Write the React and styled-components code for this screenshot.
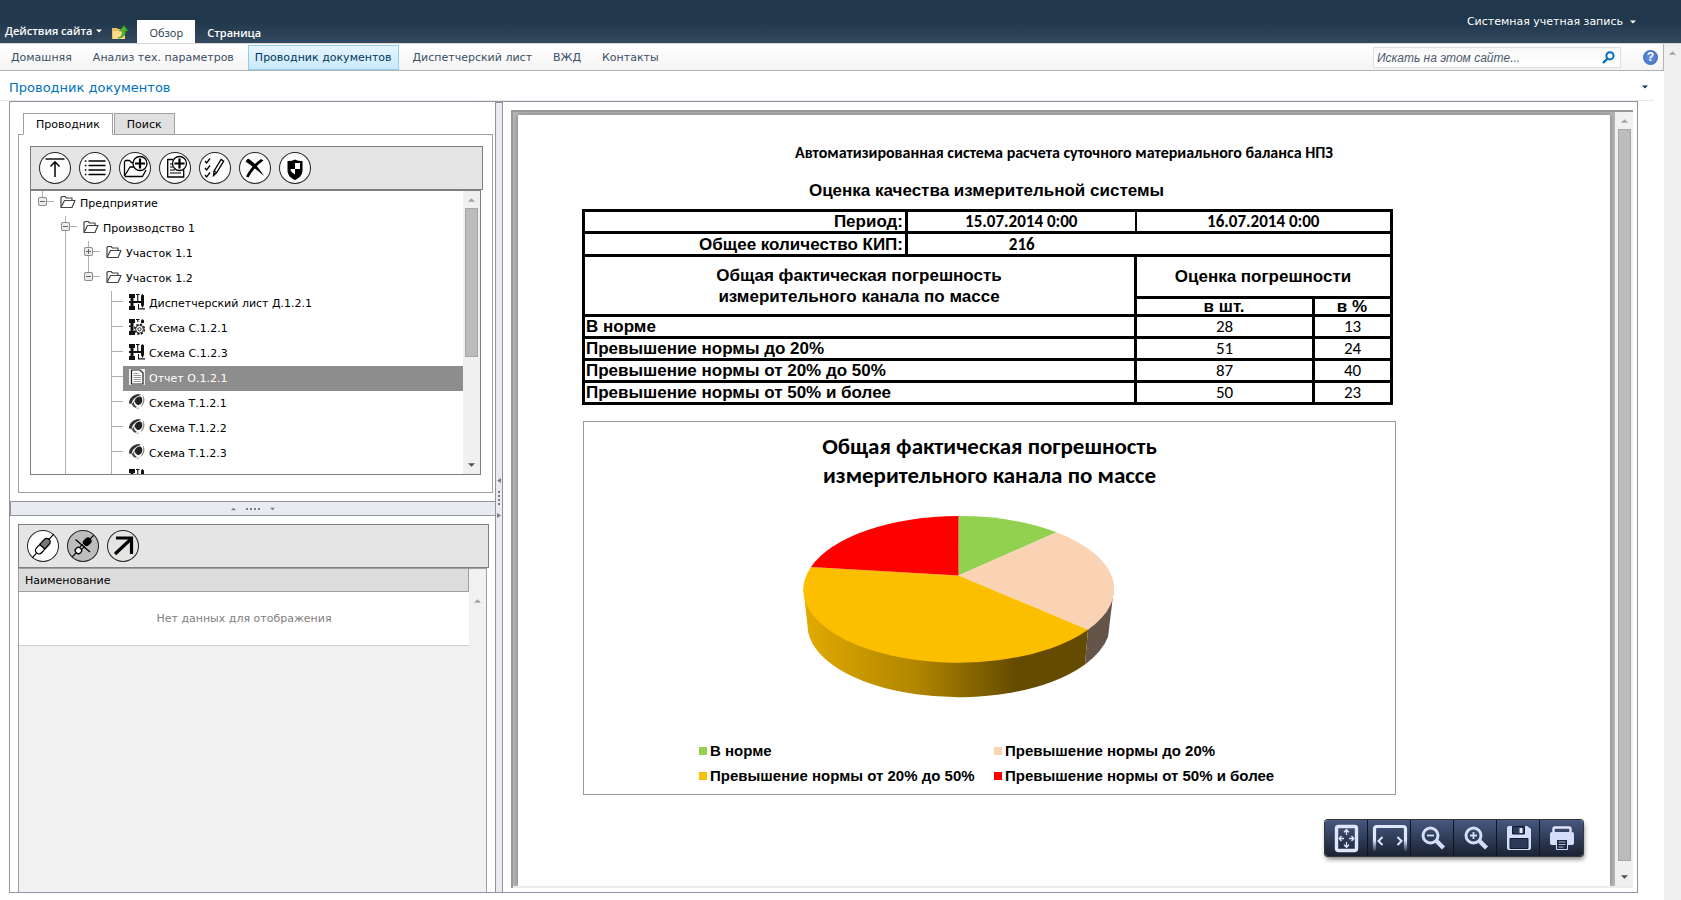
import React, { useState } from "react";
import styled, { createGlobalStyle, css } from "styled-components";

const NAV = [
  "Домашняя",
  "Анализ тех. параметров",
  "Проводник документов",
  "Диспетчерский лист",
  "ВЖД",
  "Контакты",
];

// guides: what every indent cell of the row draws
const TREE = [
  { name: "Предприятие", icon: "folder", guides: ["stub"], toggle: "minus" },
  { name: "Производство 1", icon: "folder", guides: ["none", "full"], toggle: "minus" },
  { name: "Участок 1.1", icon: "folder", guides: ["none", "line", "full"], toggle: "plus" },
  { name: "Участок 1.2", icon: "folder", guides: ["none", "line", "stub"], toggle: "minus" },
  { name: "Диспетчерский лист Д.1.2.1", icon: "sheet", guides: ["none", "line", "none", "full"] },
  { name: "Схема С.1.2.1", icon: "gear", guides: ["none", "line", "none", "full"] },
  { name: "Схема С.1.2.3", icon: "sheet", guides: ["none", "line", "none", "full"] },
  { name: "Отчет О.1.2.1", icon: "report", guides: ["none", "line", "none", "full"] },
  { name: "Схема Т.1.2.1", icon: "trend", guides: ["none", "line", "none", "full"] },
  { name: "Схема Т.1.2.2", icon: "trend", guides: ["none", "line", "none", "full"] },
  { name: "Схема Т.1.2.3", icon: "trend", guides: ["none", "line", "none", "full"] },
  { name: "", icon: "sheet", guides: ["none", "line", "none", "full"] },
];

const ROWS = [
  { name: "В норме", count: 28, percent: 13, color: "#92d050" },
  { name: "Превышение нормы до 20%", count: 51, percent: 24, color: "#fad3b5" },
  { name: "Превышение нормы от 20% до 50%", count: 87, percent: 40, color: "#fcbf00" },
  { name: "Превышение нормы от 50% и более", count: 50, percent: 23, color: "#ff0000" },
];

const toolIcons = {
  top: (
    <g fill="none" stroke="#000">
      <path d="M6.5 7h19" strokeWidth="1.4" />
      <path d="M16 25V10M11.5 14.5L16 9.8l4.5 4.7" strokeWidth="1.5" />
    </g>
  ),
  list: (
    <g stroke="#000" strokeWidth="1.6">
      <path d="M9.5 9h17M9.5 13.5h17M9.5 18h17M9.5 22.5h17" />
      <path d="M5.8 9h1.6M5.8 13.5h1.6M5.8 18h1.6M5.8 22.5h1.6" />
    </g>
  ),
  folderAdd: (
    <g fill="none" stroke="#000" strokeWidth="1.3" strokeLinejoin="round">
      <path d="M5.5 24V9.5l1-1h4l2 2h4M5.5 24l5.5-9h4.5M5.5 24.5h18l3.5-6.5" />
      <circle cx="21" cy="11.5" r="7" fill="#fff" />
      <path d="M21 6.5v10M16 11.5h10" strokeWidth="2.2" />
    </g>
  ),
  docAdd: (
    <g fill="none" stroke="#000" strokeWidth="1.3">
      <path d="M14 7.5H8.7v17.5h16V18" />
      <path d="M11 12h3M11 15h3M11 18h5M11 21h11" strokeWidth="1" />
      <circle cx="20.5" cy="11.5" r="7" fill="#fff" />
      <path d="M20.5 6.5v10M15.5 11.5h10" strokeWidth="2.2" />
    </g>
  ),
  check: (
    <g fill="none" stroke="#000" strokeWidth="1.3">
      <path d="M6 9l1.6 2 3.4-4.5M6 16l1.6 2 3.4-4.5M6 23l1.6 2 3.4-4.5" />
      <path d="M14.5 23.5l.6-4.500 7-11.500 2.600 1.700-7 11.500z" fill="#fff" />
      <path d="M15.100 19l2.600 1.700M14.500 23.500l1-2" />
    </g>
  ),
  remove: (
    <g fill="#000">
      <path d="M6.500 9.500L9 6.500c5 3 11 9 16 17.500-6-5-12-10-18.500-14.500z" />
      <path d="M22 7l2.500 1.500C18 13 13 19 9.500 25.500L7 24.500C10.500 17 16 11 22 7z" />
    </g>
  ),
  shield: (
    <g>
      <path d="M8.5 9c3 0 5.500-.3 7.500-1.500 2 1.200 4.500 1.500 7.500 1.500v9c0 5-3 8-7.500 10-4.500-2-7.500-5-7.500-10z" />
      <path d="M16 11h5v6h-5zM11.500 17H16v5.500c-2.500-1.500-4.500-3-4.500-5.500z" fill="#fff" />
    </g>
  ),
  plug: (
    <g stroke="#000" fill="none" transform="rotate(-48 16 16)">
      <path d="M0 16h6M25 16h7" strokeWidth="1.2" />
      <rect x="6.500" y="12.500" width="10" height="7" rx="3.500" strokeWidth="1.300" fill="#fff" />
      <path d="M15 12.500h6.500a3.500 3.500 0 010 7H15z" fill="#777" strokeWidth="1.300" />
    </g>
  ),
  unplug: (
    <g stroke="#000" fill="none">
      <g transform="rotate(-45 16 16)">
        <path d="M1 16h6M25 16h6" strokeWidth="1.3" />
        <rect x="6.500" y="13" width="6" height="6" rx="2.500" fill="#fff" strokeWidth="1.300" />
        <rect x="18" y="13" width="8" height="6" rx="2.500" fill="#000" />
        <path d="M13 14.500h4M13 17.500h4" strokeWidth="1.200" />
      </g>
      <path d="M8.500 9.500L23 22" strokeWidth="1.300" />
    </g>
  ),
  open: (
    <g fill="none" stroke="#000">
      <path d="M9 8h15.500v16" strokeWidth="3.200" />
      <path d="M8 24L24 9" strokeWidth="3.200" />
    </g>
  ),
};

const treeIcons = {
  folder: (
    <g fill="#fff" stroke="#444" strokeWidth="1.200" strokeLinejoin="round">
      <path d="M1 13V3.500l1-1h3l1.500 1.500H12V6" />
      <path d="M1 13.500L4.500 6.500H15L12 13.500z" />
    </g>
  ),
  sheet: (
    <g fill="#111">
      <path d="M0 0h6v4H4.500v3H12v2H4.500v3H6v4H0v-4h1.500V9H0V7h1.500V4H0z" />
      <path d="M7 0h3.500v1H9.300v7H8.200V1H7z" />
      <path d="M12 1.500L13.500 0 15 1.500V11h-3zM9 14.300h7v1.200H9zM9 10h1v5H9z" />
      <path d="M12 11h3l-1.500 3z" />
    </g>
  ),
  gear: (
    <g fill="#111">
      <path d="M0 0h6v4H4.500v8H6v4H0v-4h1.500V8H0V6.500h1.500V4H0z" />
      <path d="M7 0h3.500v1H9.300v2H8.200V1H7zM12 1.500L13.500 0 15 1.500V4h-3z" />
      <circle cx="10.500" cy="10.200" r="4.800" fill="none" stroke="#222" strokeWidth="1.800" strokeDasharray="2.200 1.550" />
      <circle cx="10.500" cy="10.200" r="3.900" fill="#fff" stroke="#222" strokeWidth="1" />
      <circle cx="10.500" cy="10.200" r="1.600" fill="#fff" stroke="#222" />
    </g>
  ),
  report: (
    <g>
      <path d="M0 0h16v16H0z" fill="#eee" />
      <path d="M2.500 1h8.500l3 3v11H2.500z" fill="#fff" stroke="#222" strokeWidth="1.200" />
      <path d="M4.500 4.500h5M4.500 6.500h7.500M4.500 8.500h7.500M4.500 10.500h7.500M4.500 12.500h7.500" stroke="#999" />
    </g>
  ),
  trend: (
    <g>
      <path d="M0 9.500C0 4 4 .5 10 0l2 1C7 2.500 3.500 5 2.500 10z" fill="#333" />
      <path d="M5.500 7.500C6 4 8.500 2.500 11.500 2.500c1.800 1 2.300 3.200 1.500 5.500-.8 1.800-2.300 3-4 3.200-1.500-.7-2.700-2-3.500-3.700z" fill="#222" />
      <path d="M13.500 1c2.600 2.500 2.800 7.500-.5 11l-2 1c3.300-3.500 4-7.500 2.500-12z" fill="#888" />
      <path d="M2.500 11l2-3.500c.3 2.500 1.500 4.500 3.500 5.500l-1.500.8c-1.700-.4-2.800-1.600-3-2.800z" fill="#444" />
      <path d="M7 14l3.500-.5L9 15.500z" fill="#bbb" />
    </g>
  ),
};

const viewerIcons = {
  fitPage: (
    <g fill="none" stroke="#dfe6fb">
      <rect x="11.500" y="6.500" width="20" height="24" rx="2" strokeWidth="3.400" />
      <path d="M21.500 10v5M19 12.200l2.500-2.500 2.500 2.500M21.500 22v5M19 24.800l2.500 2.500 2.500-2.500M14.500 18.500h4.500M16.500 16l-2.300 2.500 2.300 2.500M24 18.500h4.500M26.500 16l2.300 2.500-2.300 2.500" strokeWidth="1.300" />
    </g>
  ),
  fitWidth: (
    <g fill="none">
      <path d="M6.500 31V9a2.500 2.500 0 012.500-2.500h26A2.500 2.500 0 0137.500 9v22" stroke="url(#fade)" strokeWidth="3.200" />
      <path d="M14.500 17l-4 4 4 4M29.500 17l4 4-4 4" stroke="#dfe6fb" strokeWidth="2" />
    </g>
  ),
  zoomOut: (
    <g fill="none" stroke="#d5def9">
      <circle cx="19.500" cy="15.500" r="7.500" strokeWidth="3" />
      <path d="M25.500 21l7 7" strokeWidth="4.400" />
      <path d="M16 15.500h7" strokeWidth="1.800" />
    </g>
  ),
  zoomIn: (
    <g fill="none" stroke="#d5def9">
      <circle cx="19.500" cy="15.500" r="7.500" strokeWidth="3" />
      <path d="M25.500 21l7 7" strokeWidth="4.400" />
      <path d="M16 15.500h7M19.500 12v7" strokeWidth="1.800" />
    </g>
  ),
  save: (
    <g>
      <path d="M10 8a2 2 0 012-2h18l4 3v19a2 2 0 01-2 2H12a2 2 0 01-2-2z" fill="#d5def9" />
      <path d="M15.500 6.500h12V14h-12zM13 18.500h18v10H13z" fill="#2c3a58" stroke="#111a2b" />
      <path d="M22.500 8h3v5h-3z" fill="#e6ebfc" />
    </g>
  ),
  print: (
    <g>
      <path d="M13.500 12.500V9a1.500 1.500 0 011.500-1.500h14A1.500 1.500 0 0130.500 9v3.500" fill="none" stroke="#dfe6fb" strokeWidth="2.400" />
      <path d="M10 14a2 2 0 012-2h20a2 2 0 012 2v9a2 2 0 01-2 2H12a2 2 0 01-2-2z" fill="#d5def9" />
      <path d="M16.500 19.500h11v10h-11z" fill="#1d273d" stroke="#d5def9" />
      <path d="M18.500 22h7M18.500 24.500h7M18.500 27h5" stroke="#a9b6dc" />
    </g>
  ),
};

const Caret = ({ up, size = 7, color = "#fff" }) => (
  <svg width={size} height="4" viewBox="0 0 8 4" aria-hidden="true">
    <path d={up ? "M0 4h8L4 0z" : "M0 0h8L4 4z"} fill={color} />
  </svg>
);

const Tool = ({ name, label, bg }) => (
  <RoundButton type="button" aria-label={label} $bg={bg}>
    <svg width="32" height="32" viewBox="0 0 32 32">
      {toolIcons[name]}
    </svg>
  </RoundButton>
);

const Pie = () => (
  <svg width="312" height="184" viewBox="802 515 312 184" role="img" aria-label="Диаграмма погрешности">
    <defs>
      <linearGradient id="side" gradientUnits="userSpaceOnUse" x1="803" y1="0" x2="1088" y2="0">
        <stop offset="0" stopColor="#e2ab00" />
        <stop offset="0.4" stopColor="#b08500" />
        <stop offset="0.75" stopColor="#654b00" />
        <stop offset="1" stopColor="#654b00" />
      </linearGradient>
    </defs>
    <path d="M803.500 589L807.500 626A151 72 0 001085 664.500L1088 629.700z" fill="url(#side)" />
    <path d="M1113.500 592L1108 637Q1102 652 1085 664.500L1088 629.700z" fill="#65544a" />
    <path d="M958.500 575.500V516A155 73 0 011056.500 532.300z" fill="#92d050" />
    <path d="M958.500 575.500L1056.500 532.300A155 73 0 011088 629.700z" fill="#fad3b5" />
    <path d="M958.500 575.500L1088 629.700A155 73 0 01811 567z" fill="#fcbf00" />
    <path d="M958.500 575.500L811 567A155 73 0 01958.500 516z" fill="#ff0000" />
  </svg>
);

const App = () => {
  const [tab, setTab] = useState("Проводник");
  const [selected, setSelected] = useState("Отчет О.1.2.1");
  const [query, setQuery] = useState("");

  return (
    <Page>
      <GlobalStyle />
      <Ribbon>
        <RibbonLeft>
          <MenuButton type="button">
            Действия сайта <Caret size={6} />
          </MenuButton>
          <IconButton type="button" aria-label="Вверх">
            <svg width="16" height="16" viewBox="0 0 16 16">
              <path d="M0 4h5l1 1h6v10H0z" fill="#e9bf5b" />
              <path d="M1 7h12v8H1z" fill="#f7dc8c" />
              <path d="M6 14c4-1 4.500-4 4.500-7H7.500L12 1.500 16 7h-2.500c0 4-2 7-7.500 7z" fill="#4fb52c" stroke="#2f8a1c" strokeWidth=".6" />
            </svg>
          </IconButton>
          <RibbonTab type="button" $active>
            Обзор
          </RibbonTab>
          <RibbonTab type="button">Страница</RibbonTab>
        </RibbonLeft>
        <UserButton type="button">
          Системная учетная запись <Caret size={6} />
        </UserButton>
      </Ribbon>

      <Body>
        <Workspace>
          <NavBar>
            <NavLinks>
              {NAV.map((item) => (
                <NavLink href="#" key={item} $active={item === "Проводник документов"}>
                  {item}
                </NavLink>
              ))}
            </NavLinks>
            <SearchBox>
              <input
                aria-label="Поиск по сайту"
                placeholder="Искать на этом сайте..."
                value={query}
                onChange={(e) => setQuery(e.target.value)}
              />
              <IconButton type="button" aria-label="Найти">
                <svg width="13" height="13" viewBox="0 0 13 13">
                  <circle cx="8" cy="4.800" r="3.600" fill="none" stroke="#0072bc" strokeWidth="2" />
                  <path d="M5.500 7.500L1 12" stroke="#0072bc" strokeWidth="2.400" />
                </svg>
              </IconButton>
            </SearchBox>
            <HelpButton type="button" aria-label="Справка">
              ?
            </HelpButton>
          </NavBar>

          <TitleRow>
            <h1>Проводник документов</h1>
            <Caret size={6} color="#003759" />
          </TitleRow>

          <Frame>
            <LeftPane>
              <Tabs>
                {["Проводник", "Поиск"].map((t) => (
                  <Tab type="button" key={t} $active={t === tab} onClick={() => setTab(t)}>
                    {t}
                  </Tab>
                ))}
              </Tabs>
              <Explorer>
                <Toolbar>
                  <Tool name="top" label="Вверх" />
                  <Tool name="list" label="Список" />
                  <Tool name="folderAdd" label="Создать папку" />
                  <Tool name="docAdd" label="Создать документ" />
                  <Tool name="check" label="Изменить" />
                  <Tool name="remove" label="Удалить" />
                  <Tool name="shield" label="Права" />
                </Toolbar>
                <TreeBox>
                  <TreeList>
                    {TREE.map((node, i) => (
                      <TreeRow key={i}>
                        {node.guides.map((g, k) => {
                          const last = k === node.guides.length - 1;
                          return (
                            <Guide key={k} $kind={g} $branch={last}>
                              {last && node.toggle && (
                                <Toggle type="button" aria-label="Развернуть">
                                  <svg width="9" height="9" viewBox="0 0 9 9">
                                    <path
                                      d={node.toggle === "plus" ? "M2 4.500h5M4.500 2v5" : "M2 4.500h5"}
                                      stroke="#666"
                                    />
                                  </svg>
                                </Toggle>
                              )}
                            </Guide>
                          );
                        })}
                        <NodeLabel
                          $selected={node.name === selected}
                          onClick={() => setSelected(node.name)}
                        >
                          <svg width="16" height="16" viewBox="0 0 16 16">
                            {treeIcons[node.icon]}
                          </svg>
                          <span>{node.name}</span>
                        </NodeLabel>
                      </TreeRow>
                    ))}
                  </TreeList>
                  <ScrollTrack>
                    <Caret up color="#a3a3a3" />
                    <ScrollThumb $height="149px" />
                    <Caret color="#505050" />
                  </ScrollTrack>
                </TreeBox>
              </Explorer>

              <HSplitter>
                <Caret up size={5} color="#7a7d88" />
                <Dots />
                <Caret size={5} color="#7a7d88" />
              </HSplitter>

              <Details>
                <Toolbar>
                  <Tool name="plug" label="Связать" bg="#fff" />
                  <Tool name="unplug" label="Отвязать" bg="#bdbdbd" />
                  <Tool name="open" label="Открыть" bg="#e4e4e2" />
                </Toolbar>
                <GridBox>
                  <GridTable>
                    <thead>
                      <tr>
                        <th>Наименование</th>
                      </tr>
                    </thead>
                    <tbody>
                      <tr>
                        <td>Нет данных для отображения</td>
                      </tr>
                    </tbody>
                  </GridTable>
                  <GridScroll>
                    <Caret up color="#a3a3a3" />
                  </GridScroll>
                </GridBox>
              </Details>
            </LeftPane>

            <VSplitter>
              <svg width="4" height="5" viewBox="0 0 4 5">
                <path d="M4 0v5L0 2.500z" fill="#7a7d88" />
              </svg>
              <Dots $vertical />
              <svg width="4" height="5" viewBox="0 0 4 5">
                <path d="M0 0v5l4-2.500z" fill="#7a7d88" />
              </svg>
            </VSplitter>

            <Viewer>
              <Canvas>
                <Sheet>
                  <ReportSystem>Автоматизированная система расчета суточного материального баланса НПЗ</ReportSystem>
                  <Report>
                    <ReportTitle>Оценка качества измерительной системы</ReportTitle>
                    <ReportTable>
                      <colgroup>
                        <col width="323" />
                        <col width="229" />
                        <col width="178" />
                        <col width="78" />
                      </colgroup>
                      <tbody>
                        <ReportRow $height="22px">
                          <Label $align="right">Период:</Label>
                          <Value $bold $thin>15.07.2014 0:00</Value>
                          <Value $bold colSpan={2}>16.07.2014 0:00</Value>
                        </ReportRow>
                        <ReportRow $height="23px">
                          <Label $align="right">Общее количество КИП:</Label>
                          <Value $bold $open>216</Value>
                          <Value colSpan={2} />
                        </ReportRow>
                        <ReportRow $height="42px">
                          <Label $align="center" colSpan={2} rowSpan={2}>
                            Общая фактическая погрешность
                            <br />
                            измерительного канала по массе
                          </Label>
                          <Label $align="center" colSpan={2}>
                            Оценка погрешности
                          </Label>
                        </ReportRow>
                        <ReportRow $height="18px" $tight>
                          <Label $align="center">в шт.</Label>
                          <Label $align="center">в %</Label>
                        </ReportRow>
                        {ROWS.map((row) => (
                          <ReportRow key={row.name} $height="22px">
                            <Label colSpan={2}>{row.name}</Label>
                            <Value>{row.count}</Value>
                            <Value>{row.percent}</Value>
                          </ReportRow>
                        ))}
                      </tbody>
                    </ReportTable>
                    <Chart>
                      <ChartTitle>
                        Общая фактическая погрешность
                        <br />
                        измерительного канала по массе
                      </ChartTitle>
                      <PieBox>
                        <Pie />
                      </PieBox>
                      <Legend>
                        {ROWS.map((row) => (
                          <LegendItem key={row.name} $color={row.color}>
                            {row.name}
                          </LegendItem>
                        ))}
                      </Legend>
                    </Chart>
                  </Report>
                  <ViewerTools>
                    {[
                      ["fitPage", "Страница целиком"],
                      ["fitWidth", "По ширине"],
                      ["zoomOut", "Уменьшить"],
                      ["zoomIn", "Увеличить"],
                      ["save", "Сохранить"],
                      ["print", "Печать"],
                    ].map(([name, label]) => (
                      <button type="button" key={name} aria-label={label}>
                        <svg width="43" height="36" viewBox="0 0 43 36">
                          <defs>
                            <linearGradient id="fade" gradientUnits="userSpaceOnUse" x1="0" y1="20" x2="0" y2="32">
                              <stop offset="0" stopColor="#dfe6fb" />
                              <stop offset="1" stopColor="#dfe6fb" stopOpacity="0" />
                            </linearGradient>
                          </defs>
                          {viewerIcons[name]}
                        </svg>
                      </button>
                    ))}
                  </ViewerTools>
                </Sheet>
                <ScrollTrack $wide>
                  <Caret up color="#a3a3a3" />
                  <ScrollThumb $height="auto" />
                  <Caret color="#505050" />
                </ScrollTrack>
              </Canvas>
            </Viewer>
          </Frame>
        </Workspace>
        <PageScroll>
          <Caret up color="#a3a3a3" />
        </PageScroll>
      </Body>
    </Page>
  );
};

const ui = `"DejaVu Sans", sans-serif`;
const arial = `"Liberation Sans", sans-serif`;
const calibri = `Carlito, "Open Sans", sans-serif`;

const GlobalStyle = createGlobalStyle`
  * {
    box-sizing: border-box;
  }

  body {
    margin: 0;
    overflow: hidden;
    background: #fff;
    font-family: ${ui};
    font-size: 11px;
    color: #000;
  }

  button {
    padding: 0;
    border: 0;
    background: none;
    font: inherit;
    color: inherit;
  }

  svg {
    display: block;
    flex: none;
  }
`;

const Page = styled.div`
  height: 100vh;
  display: flex;
  flex-direction: column;
`;

const Ribbon = styled.header`
  height: 44px;
  flex: none;
  display: flex;
  justify-content: space-between;
  align-items: flex-start;
  background: linear-gradient(#21374c 50%, #34495f);
  border-bottom: 1px solid #d5d8dd;
  color: #fff;
`;

const RibbonLeft = styled.div`
  height: 43px;
  padding-left: 5px;
  display: flex;
  align-items: flex-end;
  font-family: "Open Sans", sans-serif;
  font-size: 11px;
`;

const MenuButton = styled.button`
  height: 25px;
  display: flex;
  align-items: center;
  gap: 4px;
  font-weight: 600;
`;

const IconButton = styled.button`
  display: flex;
  align-items: center;

  ${RibbonLeft} & {
    height: 22px;
    margin: 0 9px 0 10px;
  }
`;

const RibbonTab = styled.button`
  height: 23px;
  padding: 2px 12px 0;
  line-height: 21px;
  ${(props) =>
    props.$active
      ? css`
          background: #fff;
          color: #21374c;
        `
      : css`
          font-weight: 600;
        `}
`;

const UserButton = styled.button`
  height: 43px;
  padding-right: 45px;
  display: flex;
  align-items: center;
  gap: 7px;
`;

const Body = styled.div`
  flex: 1;
  min-height: 0;
  display: flex;
`;

const Workspace = styled.main`
  flex: 1;
  min-width: 0;
  display: flex;
  flex-direction: column;
`;

const NavBar = styled.nav`
  height: 27px;
  flex: none;
  padding-left: 4px;
  padding-right: 5px;
  display: flex;
  align-items: center;
  background: linear-gradient(#fff, #f4f4f4);
  border-right: 1px solid #b4b4b8;
  border-bottom: 1px solid #b4b4b8;
`;

const NavLinks = styled.div`
  flex: 1;
  height: 26px;
  display: flex;
  gap: 7px;
`;

const NavLink = styled.a`
  height: 25px;
  margin-top: 1px;
  padding: 0 6px;
  border: 1px solid transparent;
  line-height: 23px;
  text-decoration: none;
  color: #3b4f65;
  ${(props) =>
    props.$active &&
    css`
      border-color: #91cdf2;
      background: linear-gradient(#e6f5fe, #c9e9fd);
      color: #003759;
    `}
`;

const SearchBox = styled.div`
  width: 248px;
  height: 21px;
  margin-right: 22px;
  padding-right: 5px;
  display: flex;
  align-items: center;
  border: 1px solid #e0e0e3;
  background: linear-gradient(#f8f8f8, #fff);

  input {
    flex: 1;
    min-width: 0;
    padding: 2px 3px 0;
    border: 0;
    background: none;
    font: italic 12px ${arial};
    color: #4c5a6c;
  }

  input::placeholder {
    color: #4c5a6c;
  }
`;

const HelpButton = styled.button`
  width: 15px;
  height: 15px;
  border-radius: 50%;
  background: radial-gradient(#6f9be0, #2f62b8);
  color: #fff;
  font: bold 12px/15px ${arial};
`;

const TitleRow = styled.div`
  height: 30px;
  flex: none;
  margin-right: 10px;
  padding: 3px 6px 0 9px;
  display: flex;
  justify-content: space-between;
  align-items: center;
  border-bottom: 1px solid #e8e8ec;

  h1 {
    margin: 0;
    font-size: 13px;
    font-weight: normal;
    color: #0072bc;
  }
`;

const Frame = styled.div`
  flex: 1;
  min-height: 0;
  margin: 0 26px 7px 9px;
  display: flex;
  border: 1px solid #8f94a3;
`;

const LeftPane = styled.section`
  width: 485px;
  flex: none;
  padding-top: 11px;
  display: flex;
  flex-direction: column;
`;

const Tabs = styled.div`
  padding-left: 13px;
  display: flex;
  gap: 1px;
  margin-bottom: -1px;
  z-index: 1;
`;

const Tab = styled.button`
  height: 22px;
  padding: 0 12px;
  border: 1px solid #a0a0a0;
  background: #e0e0e0;
  ${(props) =>
    props.$active &&
    css`
      border-bottom-color: #fff;
      background: #fff;
    `}
`;

const Explorer = styled.div`
  margin: 0 2px 8px 8px;
  padding: 11px 9px 17px 11px;
  border: 1px solid #a0a0a0;
`;

const Toolbar = styled.div`
  height: 44px;
  flex: none;
  padding-left: 8px;
  display: flex;
  align-items: center;
  gap: 8px;
  border: 1px solid #7f7f7f;
  background: #e5e5e5;
`;

const RoundButton = styled.button`
  width: 32px;
  height: 32px;
  border-radius: 50%;
  background: ${(props) => props.$bg || "#fdfdfd"};
  box-shadow: inset 0 0 0 1px #222;
`;

const TreeBox = styled.div`
  height: 285px;
  margin-right: 2px;
  display: flex;
  border: 1px solid #7f7f7f;
  overflow: hidden;
`;

const TreeList = styled.ul`
  flex: 1;
  margin: 0;
  padding: 0;
  list-style: none;
`;

const TreeRow = styled.li`
  height: 25px;
  display: flex;
`;

const guideHeight = { none: "0", stub: "10px", full: "25px", line: "25px" };

const Guide = styled.div`
  width: 23px;
  height: 25px;
  flex: none;
  padding: 6px 0 0 7px;
  background-repeat: no-repeat;
  background-image: linear-gradient(#b0b0b0, #b0b0b0), linear-gradient(#b0b0b0, #b0b0b0);
  background-position: 11px 0, 11px 10px;
  background-size:
    1px ${(props) => guideHeight[props.$kind]},
    ${(props) => (props.$branch ? "12px 1px" : "0 0")};
`;

const Toggle = styled.button`
  display: block;
  border-radius: 2px;
  background: #ececec;
  box-shadow: inset 0 0 0 1px #8c8c8c;
`;

const NodeLabel = styled.div`
  flex: 1;
  padding-left: 6px;
  display: flex;
  align-items: center;
  gap: 4px;
  white-space: nowrap;
  cursor: pointer;

  svg {
    margin-bottom: 3px;
  }

  ${(props) =>
    props.$selected &&
    css`
      background: #8d8d8d;
      color: #fff;
    `}
`;

const ScrollTrack = styled.div`
  width: ${(props) => (props.$wide ? "18px" : "17px")};
  padding: 7px 2px;
  flex: none;
  display: flex;
  flex-direction: column;
  align-items: center;
  justify-content: space-between;
  gap: 6px;
  background: #f0f0f0;
`;

const ScrollThumb = styled.div`
  width: 13px;
  flex: ${(props) => (props.$height === "auto" ? "1" : "none")};
  height: ${(props) => props.$height};
  margin-bottom: auto;
  border: 1px solid #a8a8a8;
  background: #bcbcbc;
  ${(props) =>
    props.$height === "auto" &&
    css`
      margin-bottom: 8px;
    `}
`;

const HSplitter = styled.div`
  height: 15px;
  flex: none;
  display: flex;
  align-items: center;
  justify-content: center;
  gap: 10px;
  border: 1px solid #8f94a3;
  border-right: 0;
  background: #eaebf0;
`;

const Dots = styled.div`
  width: ${(props) => (props.$vertical ? "2px" : "14px")};
  height: ${(props) => (props.$vertical ? "14px" : "2px")};
  background: repeating-linear-gradient(
    ${(props) => (props.$vertical ? "180deg" : "90deg")},
    #7a7d88 0 2px,
    transparent 2px 4px
  );
`;

const VSplitter = styled.div`
  width: 8px;
  flex: none;
  display: flex;
  flex-direction: column;
  align-items: center;
  justify-content: center;
  gap: 8px;
  border: solid #8f94a3;
  border-width: 1px 1px 0;
  background: #eaebf0;
`;

const Details = styled.div`
  flex: 1;
  min-height: 0;
  margin: 8px 6px 0 8px;
  display: flex;
  flex-direction: column;
`;

const GridBox = styled.div`
  flex: 1;
  margin-right: 2px;
  display: flex;
  align-items: flex-start;
  border: 1px solid #9f9f9f;
  border-bottom: 0;
  background: #f1f1f1;
`;

const GridTable = styled.table`
  flex: 1;
  border-spacing: 0;
  background: #fff;

  th {
    height: 23px;
    padding: 0 6px;
    border: solid #9f9f9f;
    border-width: 0 1px 1px 0;
    background: #dcdcdc;
    text-align: left;
    font-weight: normal;
  }

  td {
    height: 54px;
    padding: 0;
    border-bottom: 1px solid #cfcfcf;
    text-align: center;
    color: #808080;
  }
`;

const GridScroll = styled.div`
  width: 17px;
  padding-top: 30px;
  display: flex;
  justify-content: center;
`;

const Viewer = styled.section`
  flex: 1;
  min-width: 0;
  padding: 8px 4px 4px 8px;
  display: flex;
`;

const Canvas = styled.div`
  flex: 1;
  min-width: 0;
  display: flex;
  border: solid #999;
  border-width: 2px 0 0 2px;
  background: #b5b5b5;
  box-shadow: inset 0 -2px #ececec;
  padding-bottom: 2px;
`;

const Sheet = styled.article`
  flex: 1;
  min-width: 0;
  margin: 3px 5px 0;
  padding-top: 28px;
  position: relative;
  background: #fff;
  box-shadow: 0 0 5px #777;
  clip-path: inset(-3px -5px 0 -5px);
`;

const ReportSystem = styled.p`
  margin: 0;
  text-align: center;
  font: bold 16px/20px ${calibri};
`;

const Report = styled.div`
  width: 813px;
  margin-left: 65px;
`;

const ReportTitle = styled.h2`
  margin: 18px 6px 8px 0;
  text-align: center;
  font: bold 17px/20px ${arial};
`;

const ReportTable = styled.table`
  width: 810px;
  margin-left: -1px;
  table-layout: fixed;
  border-collapse: collapse;
`;

const cell = css`
  padding: 0;
  border: 3px solid #000;
`;

const Label = styled.th`
  ${cell}
  padding: 0 2px 0 1px;
  text-align: ${(props) => props.$align || "left"};
`;

const Value = styled.td`
  ${cell}
  text-align: center;
  font-family: ${calibri};
  font-weight: ${(props) => (props.$bold ? "bold" : "normal")};
  ${(props) => props.$thin && "border-right-width: 2px;"}
  ${(props) => props.$open && "border-right: 0;"}

  ${(props) => props.$open && "& + & { border-left: 0; }"}
`;

const ReportRow = styled.tr`
  height: ${(props) => props.$height};
  font: bold 17px/${(props) => (props.$tight ? "14px" : "19px")} ${arial};

  th[rowspan] {
    line-height: 21px;
  }
`;

const Chart = styled.figure`
  height: 374px;
  margin: 16px 0 0;
  padding-top: 10px;
  border: 1px solid #999;
`;

const ChartTitle = styled.figcaption`
  text-align: center;
  font: bold 23px/29px ${calibri};
`;

const PieBox = styled.div`
  margin: 25px 63px 39px 0;
  display: flex;
  justify-content: center;
`;

const Legend = styled.ul`
  margin: 0 0 0 115px;
  padding: 0;
  display: grid;
  grid-template-columns: 295px 1fr;
  list-style: none;
  font: bold 15px/25px ${arial};
`;

const LegendItem = styled.li`
  display: flex;
  align-items: center;
  gap: 3px;
  white-space: nowrap;

  &::before {
    content: "";
    width: 8px;
    height: 8px;
    background: ${(props) => props.$color};
  }
`;

const ViewerTools = styled.div`
  position: absolute;
  right: 27px;
  bottom: 30px;
  display: flex;
  border-radius: 3px;
  background: linear-gradient(#46587f, #1a2233);
  box-shadow: 0 0 0 1px #3a3636, 1px 3px 5px #777;

  button + button {
    box-shadow: -1px 0 #10151f;
  }
`;

const PageScroll = styled.div`
  width: 17px;
  padding-top: 7px;
  display: flex;
  justify-content: center;
  background: #f0f0f0;
`;

export default App;
